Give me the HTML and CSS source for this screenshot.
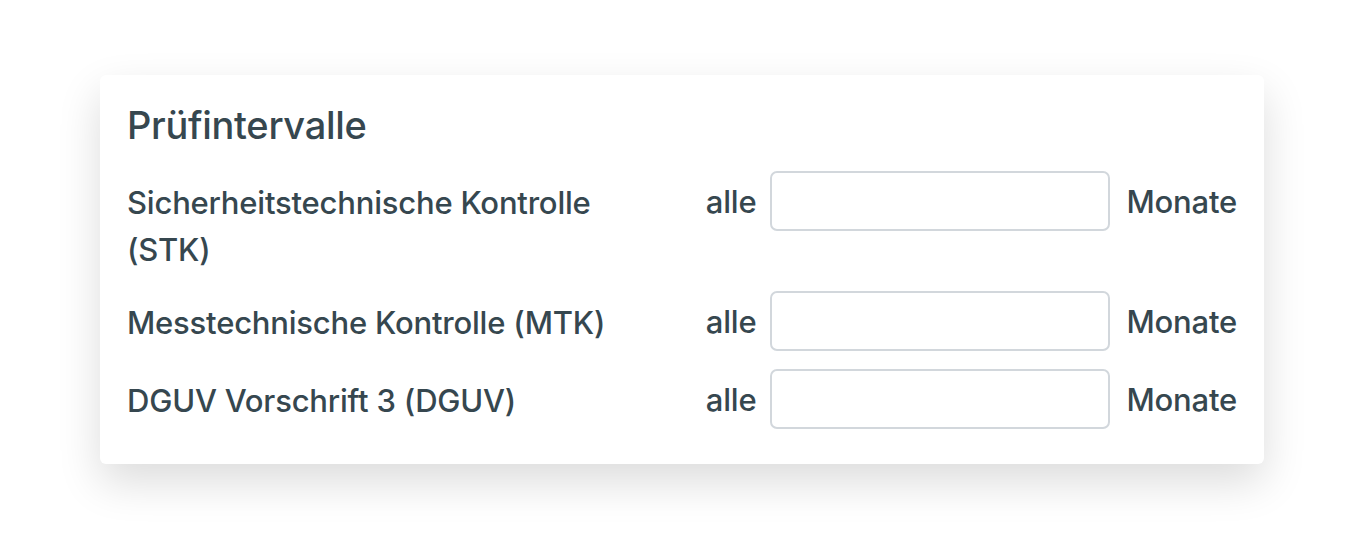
FILE: index.html
```html
<!DOCTYPE html>
<html lang="de">
<head>
<meta charset="utf-8">
<title>Prüfintervalle</title>
<link rel="stylesheet" href="styles.css">
</head>
<body>
<div class="page">
  <section class="card">
    <h2 class="card-title">Prüfintervalle</h2>
    <div class="rows">
      <div class="row">
        <div class="label">Sicherheitstechnische Kontrolle (STK)</div>
        <div class="field">
          <span class="prefix">alle</span>
          <input class="input" type="text">
          <span class="suffix">Monate</span>
        </div>
      </div>
      <div class="row">
        <div class="label">Messtechnische Kontrolle (MTK)</div>
        <div class="field">
          <span class="prefix">alle</span>
          <input class="input" type="text">
          <span class="suffix">Monate</span>
        </div>
      </div>
      <div class="row">
        <div class="label">DGUV Vorschrift 3 (DGUV)</div>
        <div class="field">
          <span class="prefix">alle</span>
          <input class="input" type="text">
          <span class="suffix">Monate</span>
        </div>
      </div>
    </div>
  </section>
</div>
</body>
</html>
```

FILE: styles.css
```css
* { box-sizing: border-box; }
html, body {
  margin: 0;
  padding: 0;
  background: #ffffff;
}
body {
  font-family: Inter, "Noto Sans", sans-serif;
  color: #36474f;
}
.page {
  min-height: 540px;
  padding: 75px 100px 0 100px;
}
.card {
  background: #ffffff;
  border-radius: 6px;
  box-shadow: 0 18px 44px rgba(0, 0, 0, 0.14);
  padding: 22px 27px 35px 27px;
}
.card-title {
  margin: 0 0 18px 0;
  font-size: 38px;
  font-weight: 500;
  line-height: 56px;
  letter-spacing: -0.3px;
}
.rows {
  display: flex;
  flex-direction: column;
  gap: 18px;
}
.row {
  display: flex;
  align-items: flex-start;
}
.label {
  flex: 0 0 520px;
  font-size: 31px;
  font-weight: 500;
  line-height: 47px;
  padding-top: 8px;
  letter-spacing: -0.2px;
}
.field {
  margin-left: auto;
  display: flex;
  align-items: center;
  font-size: 31px;
  font-weight: 500;
  letter-spacing: -0.2px;
}
.prefix { margin-right: 14px; }
.suffix { margin-left: 16px; }
.input {
  width: 340px;
  height: 60px;
  border: 2px solid #d2d7dc;
  border-radius: 7px;
  background: #fff;
  font: inherit;
  padding: 0 14px;
  outline: none;
}
```
